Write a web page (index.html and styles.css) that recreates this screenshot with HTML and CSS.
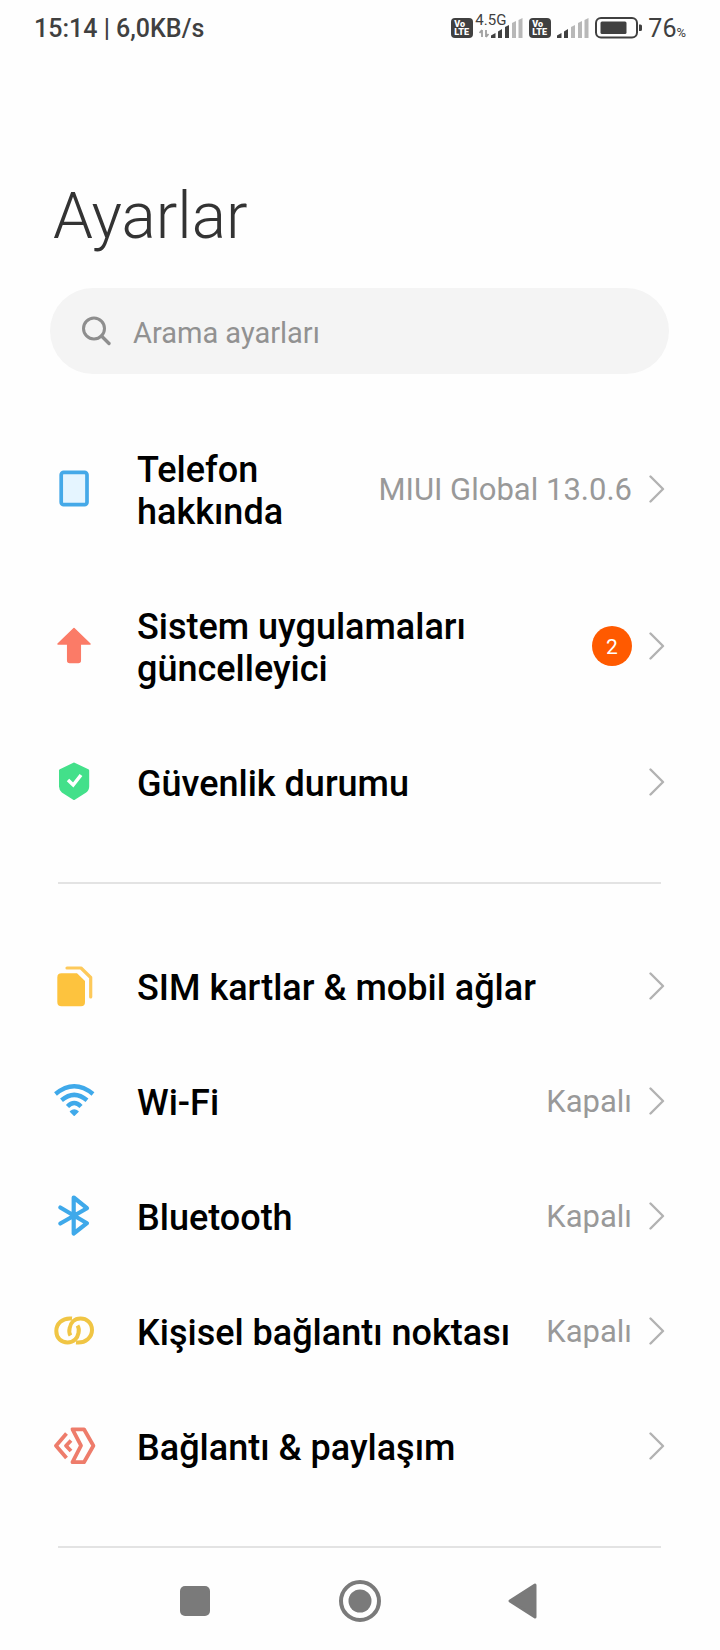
FILE: index.html
```html
<!DOCTYPE html>
<html lang="tr">
<head>
    <meta charset="UTF-8">
    <meta name="viewport" content="width=device-width, initial-scale=1.0">
    <title>Ayarlar</title>
    <link rel="stylesheet" href="styles.css">
</head>
<body>
    <!-- Shared arrow -->
    <svg class="defs" width="0" height="0" aria-hidden="true">
        <symbol id="chevron" viewBox="0 0 16 28">
            <path d="M1.5 1.5 L14 14 L1.5 26.5" fill="none" stroke="#b2b2b2" stroke-width="2.4" stroke-linecap="round" stroke-linejoin="round"/>
        </symbol>
    </svg>

    <header class="status-bar">
        <span class="clock">15:14 | 6,0KB/s</span>
        <div class="status-icons">
            <span class="volte">Vo<br>LTE</span>
            <div class="network">
                <span class="network-type">4.5G</span>
                <svg width="44" height="20" viewBox="0 0 44 20">
                    <path d="M3 19 V12 M0.5 15 L3 12 M7 12 V19 M9.5 16 L7 19" fill="none" stroke="#a0a0a0" stroke-width="1.8"/>
                    <path d="M12 20 V17.5 L16.5 15 V20 Z M19 20 V13.5 L23 11 V20 Z M26 20 V9 L30 7 V20 Z" fill="#404040"/>
                    <path d="M33 20 V5 L37 3 V20 Z M39.5 20 V2 L43.5 0 V20 Z" fill="#b8b8b8"/>
                </svg>
            </div>
            <span class="volte">Vo<br>LTE</span>
            <svg width="32" height="20" viewBox="12 0 32 20">
                <path d="M12 20 V17.5 L16.5 15 V20 Z M19 20 V13.5 L23 11 V20 Z" fill="#404040"/>
                <path d="M26 20 V9 L30 7 V20 Z M33 20 V5 L37 3 V20 Z M39.5 20 V2 L43.5 0 V20 Z" fill="#b8b8b8"/>
            </svg>
            <svg class="battery" width="47" height="22" viewBox="0 0 47 22">
                <rect x="1" y="1" width="41" height="19.5" rx="5" fill="none" stroke="#404040" stroke-width="2"/>
                <rect x="5.5" y="4.5" width="26" height="12.5" rx="1.5" fill="#404040"/>
                <path d="M44 7.5 h1.5 a1.5 1.5 0 0 1 1.5 1.5 v3.5 a1.5 1.5 0 0 1 -1.5 1.5 h-1.5 z" fill="#404040"/>
            </svg>
            <span class="percent">76<small>%</small></span>
        </div>
    </header>

    <main>
        <h1>Ayarlar</h1>

        <label class="search">
            <svg width="30" height="30" viewBox="0 0 30 30">
                <circle cx="12" cy="12.500" r="10.5" fill="none" stroke="#8e8e8e" stroke-width="3"/>
                <path d="M19.5 20 L27 27.5" stroke="#8e8e8e" stroke-width="3.4" stroke-linecap="round"/>
            </svg>
            <input type="search" placeholder="Arama ayarları" aria-label="Arama ayarları">
        </label>

        <nav class="group">
            <a class="row" href="#">
                <svg class="icon" viewBox="2 0 44 44">
                    <rect x="9.2" y="5.3" width="25.8" height="32.4" rx="2.5" fill="#e5f5ff" stroke="#45a9e8" stroke-width="3.7"/>
                </svg>
                <span class="label">Telefon hakkında</span>
                <span class="value">MIUI Global 13.0.6</span>
                <svg class="chevron"><use href="#chevron"/></svg>
            </a>
            <a class="row" href="#">
                <svg class="icon" viewBox="2 0 44 44">
                    <path d="M22 4.5 L38 20 H28.3 V36.5 Q28.3 38.5 26.3 38.5 H17.7 Q15.7 38.5 15.7 36.5 V20 H6 Z" fill="#fb7b67" stroke="#fb7b67" stroke-width="1.5" stroke-linejoin="round"/>
                </svg>
                <span class="label">Sistem uygulamaları güncelleyici</span>
                <span class="badge">2</span>
                <svg class="chevron"><use href="#chevron"/></svg>
            </a>
            <a class="row" href="#">
                <svg class="icon" viewBox="2 0 44 44">
                    <path d="M22 4 L35.7 10.5 V26.5 Q35.7 29.5 33 31.5 L22 38.5 L11 31.5 Q8.5 29.5 8.5 26.5 V10.5 Z" fill="#43e08a" stroke="#43e08a" stroke-width="3" stroke-linejoin="round"/>
                    <path d="M16 20 L21.2 25 L29 15" fill="none" stroke="#fff" stroke-width="3.5"/>
                </svg>
                <span class="label">Güvenlik durumu</span>
                <svg class="chevron"><use href="#chevron"/></svg>
            </a>
        </nav>

        <hr>

        <nav class="group">
            <a class="row" href="#">
                <svg class="icon" viewBox="2 -1 44 44">
                    <path d="M9.5 8.3 H25 L33 16 V37 Q33 41.3 29 41.3 H9.5 Q5.3 41.3 5.3 37 V12.5 Q5.3 8.3 9.5 8.3 Z" fill="#fdc33e"/>
                    <path d="M15 3 H29 L38.7 12.5 V32" fill="none" stroke="#fdc95a" stroke-width="3.2" stroke-linecap="round" stroke-linejoin="round"/>
                </svg>
                <span class="label">SIM kartlar &amp; mobil ağlar</span>
                <svg class="chevron"><use href="#chevron"/></svg>
            </a>
            <a class="row" href="#">
                <svg class="icon" viewBox="2 -1 44 44">
                    <g fill="none" stroke="#3fa9ea" stroke-width="4.4">
                        <path d="M3.500 14 Q22.2 -1.500 41 14"/>
                        <path d="M9.500 20.300 Q22.2 9.500 35 20.300"/>
                        <path d="M15.500 26.500 Q22.2 19.500 29 26.500"/>
                    </g>
                    <path d="M18.5 31.5 Q22.2 28.5 26 31.5 L22.2 35.2 Z" fill="#3fa9ea" stroke="#3fa9ea" stroke-width="1.5" stroke-linejoin="round"/>
                </svg>
                <span class="label">Wi-Fi</span>
                <span class="value">Kapalı</span>
                <svg class="chevron"><use href="#chevron"/></svg>
            </a>
            <a class="row" href="#">
                <svg class="icon" viewBox="2 -1 44 44">
                    <path d="M8.3 12.5 L35 28.2 L21.7 38.5 V2.5 L35 13.2 L8.3 28.5" fill="none" stroke="#3fa9ea" stroke-width="4.2" stroke-linecap="round" stroke-linejoin="round"/>
                </svg>
                <span class="label">Bluetooth</span>
                <span class="value">Kapalı</span>
                <svg class="chevron"><use href="#chevron"/></svg>
            </a>
            <a class="row" href="#">
                <svg class="icon" viewBox="2 -1 44 44">
                    <g fill="none" stroke="#f0c544" stroke-width="4">
                        <path d="M20 8.500 C10 7.500 4.3 14 4.3 21 C4.3 28.5 9.500 32.5 15.5 32.5 C22 32.5 25.500 28 26.500 23 Q27.500 18.500 25.500 15.500"/>
                        <path d="M24 32.5 C34 33.5 40 27 40 20 C40 12.5 34.5 8.5 28.5 8.5 C22 8.5 18.500 13 17.700 18 Q16.500 22.500 18.500 25.5"/>
                    </g>
                </svg>
                <span class="label">Kişisel bağlantı noktası</span>
                <span class="value">Kapalı</span>
                <svg class="chevron"><use href="#chevron"/></svg>
            </a>
            <a class="row" href="#">
                <svg class="icon" viewBox="2 -1 44 44">
                    <g fill="none" stroke="#ee7c6b" stroke-width="3.8" stroke-linejoin="round">
                        <path d="M20.5 4.3 H32 L41.4 20.7 L32 37.2 H20.5 L29 20.7 Z"/>
                        <path d="M14.5 8.5 L4 20.7 L14.5 33"/>
                        <path d="M19 15.5 L14 20.7 L19 26"/>
                    </g>
                </svg>
                <span class="label">Bağlantı &amp; paylaşım</span>
                <svg class="chevron"><use href="#chevron"/></svg>
            </a>
        </nav>

        <hr>
    </main>

    <footer class="nav-bar">
        <button type="button" aria-label="Son uygulamalar">
            <svg width="44" height="44" viewBox="0 0 44 44"><rect x="7" y="7" width="30" height="30" rx="5" fill="#7a7a7a"/></svg>
        </button>
        <button type="button" aria-label="Ana ekran">
            <svg width="44" height="44" viewBox="0 0 44 44">
                <circle cx="22" cy="22" r="19" fill="none" stroke="#7a7a7a" stroke-width="4"/>
                <circle cx="22" cy="22" r="11.5" fill="#7a7a7a"/>
            </svg>
        </button>
        <button type="button" aria-label="Geri">
            <svg width="44" height="44" viewBox="0 0 44 44"><path d="M7 22 L32 6 V38 Z" fill="#7a7a7a" stroke="#7a7a7a" stroke-width="3" stroke-linejoin="round"/></svg>
        </button>
    </footer>
</body>
</html>
```
FILE: styles.css
```css
* {
    box-sizing: border-box;
}

body {
    margin: 0;
    min-height: 100vh;
    display: flex;
    flex-direction: column;
    background: #fefefe;
    color: #000;
    font-family: Roboto, sans-serif;
}

.defs {
    position: absolute;
}

/* Status bar */
.status-bar {
    display: flex;
    justify-content: space-between;
    align-items: center;
    height: 56px;
    padding: 0 34px;
    color: #404040;
    font-size: 25px;
    font-weight: 500;
}

.status-icons {
    display: flex;
    align-items: center;
    gap: 6px;
}

.volte {
    width: 22px;
    height: 20px;
    padding: 2px 0 0 3px;
    border-radius: 4px;
    background: #404040;
    color: #fff;
    font-size: 9px;
    font-weight: 900;
    line-height: 8px;
}

.network {
    position: relative;
    display: flex;
}

.network-type {
    position: absolute;
    top: -6px;
    left: -4px;
    font-size: 15px;
    font-weight: 400;
    line-height: 16px;
}

.percent {
    font-weight: 400;
}

.percent small {
    font-size: 13px;
}

/* Header */
h1 {
    margin: 121px 53px 31px;
    color: #333;
    font-size: 64px;
    font-weight: 300;
    line-height: 80px;
}

.search {
    display: flex;
    align-items: center;
    gap: 21px;
    height: 86px;
    margin: 0 51px 36px 50px;
    padding: 0 32px;
    background: #f4f4f4;
    border-radius: 43px;
}

.search input {
    flex: 1;
    min-width: 0;
    padding: 4px 0 0;
    border: none;
    outline: none;
    background: none;
    font-family: inherit;
    font-size: 29px;
}

.search input::placeholder {
    color: #919191;
}

/* Setting rows */
.group {
    margin: 0 55px 0 54px;
}

hr {
    height: 2px;
    margin: 43px 59px 44px 58px;
    border: none;
    background: #e3e3e3;
}

hr:last-child {
    margin-bottom: 0;
}

.row {
    display: flex;
    align-items: center;
    padding: 34px 0;
    color: inherit;
    text-decoration: none;
}

.icon {
    width: 44px;
    height: 44px;
    flex-shrink: 0;
    margin-right: 39px;
}

.label {
    flex: 1;
    padding-top: 5px;
    font-size: 36px;
    font-weight: 500;
    line-height: 42px;
}

.value {
    padding-top: 2px;
    color: #999;
    font-size: 31px;
}

.badge {
    width: 40px;
    height: 40px;
    border-radius: 50%;
    background: #ff5a00;
    color: #fff;
    font-size: 21px;
    line-height: 42px;
    text-align: center;
}

.chevron {
    width: 16px;
    height: 28px;
    flex-shrink: 0;
    margin-left: 17px;
}

/* Navigation bar */
.nav-bar {
    display: flex;
    justify-content: center;
    align-items: center;
    height: 96px;
    margin-top: auto;
}

.nav-bar button {
    width: 165px;
    padding: 0;
    border: none;
    background: none;
}
```
